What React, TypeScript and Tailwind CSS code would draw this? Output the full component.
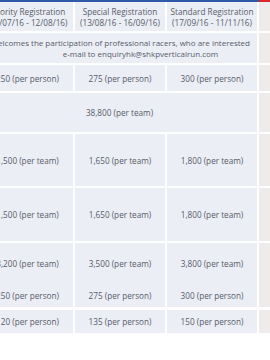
import React from "react";

const cols = "grid grid-cols-[91px_90px_90px_1fr] gap-x-[2px]";
const cell = "bg-[#ebeef4] flex flex-col items-center justify-center text-center";
const side = "bg-[#f0ebeb]";

type Row = { h: string; mt: string; cells: string[][] };

const priceRows: Row[] = [
  { h: "h-[26px]", mt: "mt-[2px]", cells: [["250 (per person)"], ["275 (per person)"], ["300 (per person)"]] },
];

const teamRows: Row[] = [
  { h: "h-[52px]", mt: "mt-[2px]", cells: [["1,500 (per team)"], ["1,650 (per team)"], ["1,800 (per team)"]] },
  { h: "h-[53px]", mt: "mt-[2px]", cells: [["1,500 (per team)"], ["1,650 (per team)"], ["1,800 (per team)"]] },
  { h: "h-[40px]", mt: "mt-[2px]", cells: [["3,200 (per team)"], ["3,500 (per team)"], ["3,800 (per team)"]] },
  { h: "h-[24px]", mt: "mt-0", cells: [["250 (per person)"], ["275 (per person)"], ["300 (per person)"]] },
  { h: "h-[23px]", mt: "mt-[3px]", cells: [["120 (per person)"], ["135 (per person)"], ["150 (per person)"]] },
];

function PlainRow({ row }: { row: Row }) {
  return (
    <div className={`${cols} ${row.h} ${row.mt}`}>
      {row.cells.map((lines, i) => (
        <div key={i} className={cell}>
          {lines.map((l) => (
            <span key={l} className="whitespace-nowrap">{l}</span>
          ))}
        </div>
      ))}
      <div className={side} />
    </div>
  );
}

export default function App() {
  return (
    <div className="w-[270px] h-[360px] overflow-hidden bg-white text-[#575c6b] text-[8.2px] leading-[11px] [font-family:'Open_Sans',sans-serif]">
      <div className="-ml-[18px]">
        {/* top accent line */}
        <div className={`${cols} h-[2px]`}>
          <div className="col-span-3 bg-[#2f5aa8] -mr-[2px]" />
          <div className="bg-[#e0262b]" />
        </div>

        {/* header */}
        <div className={`${cols} h-[29px]`}>
          <div className={cell}>
            <span className="whitespace-nowrap">Priority Registration</span>
            <span className="whitespace-nowrap">(01/07/16 - 12/08/16)</span>
          </div>
          <div className={cell}>
            <span className="whitespace-nowrap">Special Registration</span>
            <span className="whitespace-nowrap">(13/08/16 - 16/09/16)</span>
          </div>
          <div className={cell}>
            <span className="whitespace-nowrap">Standard Registration</span>
            <span className="whitespace-nowrap">(17/09/16 - 11/11/16)</span>
          </div>
          <div className={side} />
        </div>

        {/* message */}
        <div className={`${cols} h-[30px] mt-[2px] text-[8px]`}>
          <div className="col-span-3 bg-[#ebeef4] flex flex-col justify-center">
            <div className="flex justify-end pr-[7px]">
              <span className="whitespace-nowrap">
                SHKP Vertical Run welcomes the participation of professional racers, who are interested
              </span>
            </div>
            <div className="text-center pl-[42px] whitespace-nowrap">e-mail to enquiryhk@shkpverticalrun.com</div>
          </div>
          <div className={side} />
        </div>

        {priceRows.map((r, i) => (
          <PlainRow key={i} row={r} />
        ))}

        {/* team of 4 spanning */}
        <div className={`${cols} h-[39px] mt-[2px]`}>
          <div className={`col-span-3 ${cell}`}>
            <span>38,800 (per team)</span>
          </div>
          <div className={side} />
        </div>

        {teamRows.map((r, i) => (
          <PlainRow key={i} row={r} />
        ))}
      </div>
    </div>
  );
}
